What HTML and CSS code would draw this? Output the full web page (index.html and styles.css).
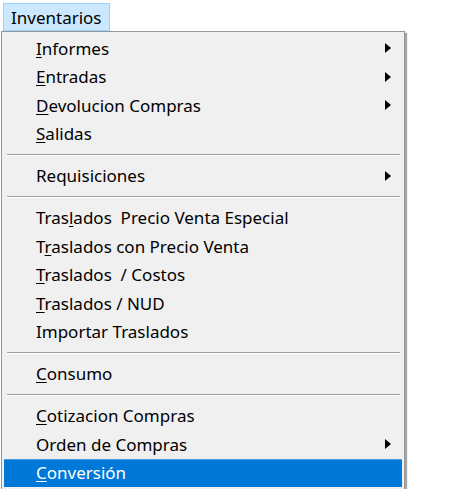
FILE: index.html
```html
<!DOCTYPE html>
<html lang="es">
<head>
<meta charset="utf-8">
<title>Inventarios</title>
<link rel="stylesheet" href="styles.css">
</head>
<body>
<div class="menubar">
  <div class="menubar-item">Inventarios</div>
</div>
<div class="menu">
  <div class="item"><span class="label"><u>I</u>nformes</span><span class="arrow"></span></div>
  <div class="item"><span class="label"><u>E</u>ntradas</span><span class="arrow"></span></div>
  <div class="item"><span class="label"><u>D</u>evolucion Compras</span><span class="arrow"></span></div>
  <div class="item"><span class="label"><u>S</u>alidas</span></div>
  <div class="sep"></div>
  <div class="item"><span class="label">Requisiciones</span><span class="arrow"></span></div>
  <div class="sep"></div>
  <div class="item"><span class="label">Tras<u>l</u>ados&nbsp; Precio Venta Especial</span></div>
  <div class="item"><span class="label">T<u>r</u>aslados con Precio Venta</span></div>
  <div class="item"><span class="label"><u>T</u>raslados&nbsp; / Costos</span></div>
  <div class="item"><span class="label"><u>T</u>raslados / NUD</span></div>
  <div class="item"><span class="label">Importar Traslados</span></div>
  <div class="sep"></div>
  <div class="item"><span class="label"><u>C</u>onsumo</span></div>
  <div class="sep"></div>
  <div class="item"><span class="label"><u>C</u>otizacion Compras</span></div>
  <div class="item"><span class="label">Orden de Compras</span><span class="arrow"></span></div>
  <div class="item active"><span class="label"><u>C</u>onversión</span></div>
</div>
</body>
</html>
```
FILE: styles.css
```css
html, body {
  margin: 0;
  padding: 0;
  background: #ffffff;
  overflow: hidden;
}
body {
  font-family: "Noto Sans", "Open Sans", sans-serif;
  font-size: 17px;
  color: #000000;
  width: 461px;
  height: 489px;
}
.menubar {
  padding: 3px 0 0 3px;
  height: 28px;
  display: flex;
}
.menubar-item {
  box-sizing: border-box;
  height: 28px;
  padding: 0 7px 0 7px;
  background: #cce8ff;
  border: 1px solid #99d1ff;
  display: flex;
  align-items: center;
  color: #000000;
}
.menu {
  box-sizing: border-box;
  margin-left: 1px;
  width: 404px;
  background: #f0f0f0;
  border: 1px solid #979797;
  border-bottom: none;
  padding: 2px 2px 0 2px;
  box-shadow: 2px 2px 1px rgba(0, 0, 0, 0.35);
  height: 460px;
}
.item {
  height: 28.5px;
  display: flex;
  align-items: center;
  padding-left: 32px;
  padding-right: 11px;
  justify-content: space-between;
}
.item u {
  text-decoration: underline;
  text-underline-offset: 2px;
}
.arrow {
  width: 0;
  height: 0;
  border-left: 6px solid #000000;
  border-top: 5px solid transparent;
  border-bottom: 5px solid transparent;
}
.item.active {
  background: #0078d7;
  color: #ffffff;
  box-shadow: inset 0 1px 0 #4a9ee6;
}
.sep {
  height: 13.5px;
  display: flex;
  align-items: flex-start;
  padding: 0 2px 0 3px;
}
.sep::before {
  content: "";
  display: block;
  flex: 1;
  margin-top: 6px;
  border-top: 1px solid #a0a0a0;
  border-bottom: 1px solid #ffffff;
}
```
